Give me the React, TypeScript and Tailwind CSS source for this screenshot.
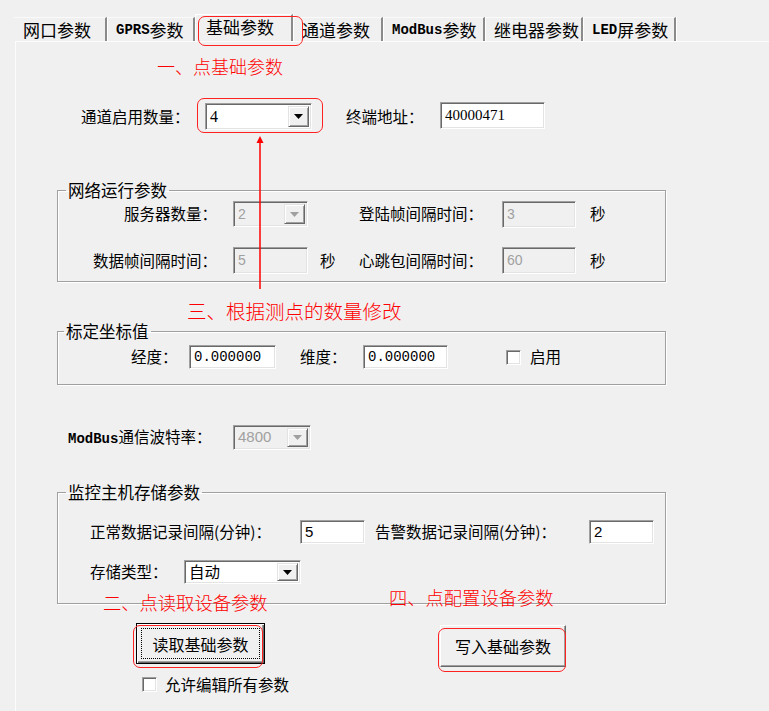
import React from 'react';

const cjk = "font-['Noto_Sans_CJK_SC',sans-serif]";
const mono = "font-['Liberation_Mono',monospace] text-[14px]";
const monoBold = "font-['Liberation_Mono',monospace] text-[14px] font-bold";

const sunken =
  'border border-t-[#a0a0a0] border-l-[#a0a0a0] border-r-white border-b-white shadow-[inset_1px_1px_0_#696969,inset_-1px_-1px_0_#e3e3e3]';

interface FieldProps {
  value: string;
  w: string;
  h: string;
  disabled?: boolean;
  font?: string;
}

function Field({ value, w, h, disabled, font }: FieldProps) {
  return (
    <div
      className={`flex items-center pl-[4px] ${w} ${h} ${sunken} ${
        disabled ? 'bg-[#f0f0f0] text-[#a0a0a0]' : 'bg-white text-black'
      } ${font ?? "font-['Liberation_Sans',sans-serif] text-[14px]"}`}
    >
      {value}
    </div>
  );
}

function Combo({ value, w, h, disabled, font }: FieldProps) {
  return (
    <div
      className={`flex ${w} ${h} ${sunken} ${disabled ? 'bg-[#f0f0f0] text-[#a0a0a0]' : 'bg-white text-black'}`}
    >
      <div className={`flex-1 flex items-center pl-[4px] ${font ?? "font-['Liberation_Sans',sans-serif] text-[14px]"}`}>
        {value}
      </div>
      <div className="w-[21px] m-[2px] ml-0 flex items-center justify-center bg-[#f0f0f0] border border-t-[#e3e3e3] border-l-[#e3e3e3] border-r-[#696969] border-b-[#696969] shadow-[inset_1px_1px_0_#fff,inset_-1px_-1px_0_#a0a0a0]">
        <svg width="9" height="5" viewBox="0 0 9 5">
          <polygon points="0,0 9,0 4.5,5" fill={disabled ? '#a0a0a0' : '#000'} />
        </svg>
      </div>
    </div>
  );
}

function Check() {
  return <div className={`w-[15px] h-[15px] bg-white ${sunken}`} />;
}

function Tab({ label, w, selected }: { label: React.ReactNode; w: string; selected?: boolean }) {
  return (
    <div
      className={`flex items-center ${w} pl-[9px] text-[17px] leading-none border-r-2 border-r-[#8a8a8a] shadow-[1px_0_0_#fff] ${
        selected ? 'h-[27px] -mt-[3px] pb-[3px] border-l border-l-white border-t border-t-white pl-[10px]' : 'h-[24px] border-t border-t-[#fafafa]'
      }`}
    >
      {label}
    </div>
  );
}

function Note({ text, className }: { text: string; className: string }) {
  return <div className={`absolute whitespace-nowrap text-[#ff0000] font-light leading-[24px] ${className}`}>{text}</div>;
}

export default function App() {
  return (
    <div className={`relative w-[769px] h-[711px] overflow-hidden bg-[#f0f0f0] text-black ${cjk}`}>
      {/* tab strip */}
      <div className="flex items-start h-[41px] pt-[17px] pl-[14px]">
        <Tab w="w-[93px]" label="网口参数" />
        <Tab w="w-[88px]" label={<><span className={monoBold}>GPRS</span>参数</>} />
        <Tab w="w-[98px]" selected label="基础参数" />
        <Tab w="w-[90px]" label="通道参数" />
        <Tab w="w-[102px]" label={<><span className={monoBold}>ModBus</span>参数</>} />
        <Tab w="w-[98px]" label="继电器参数" />
        <Tab w="w-[93px]" label={<><span className={monoBold}>LED</span>屏参数</>} />
      </div>

      {/* page */}
      <div className="ml-[15px] h-[670px] border-t border-l border-t-[#fcfcfc] border-l-[#fcfcfc] text-[15.5px]">
        {/* channel count + address */}
        <div className="flex items-center mt-[61px] pl-[65px] h-[27px]">
          <div className="w-[124px]">通道启用数量：</div>
          <Combo value="4" w="w-[107px]" h="h-[27px]" font="font-['Liberation_Serif',serif] text-[16px]" />
          <div className="w-[94px] ml-[34px]">终端地址：</div>
          <div className="-mt-[3px]">
            <Field value="40000471" w="w-[105px]" h="h-[27px]" font="font-['Liberation_Serif',serif] text-[15px]" />
          </div>
        </div>

        {/* network */}
        <fieldset className="ml-[41px] mt-[50px] w-[609px] pb-[7px] border border-[#a0a0a0] shadow-[inset_1px_1px_0_#fff,1px_1px_0_#fff]">
          <legend className="ml-[8px] px-[2px] text-[16.5px] leading-[20px]">网络运行参数</legend>
          <div className="flex items-center h-[26px] mt-[1px]">
            <div className="w-[159px] text-right">服务器数量：</div>
            <div className="ml-[16px]">
              <Combo value="2" w="w-[75px]" h="h-[26px]" disabled />
            </div>
            <div className="w-[51px]" />
            <div className="w-[143px]">登陆帧间隔时间：</div>
            <Field value="3" w="w-[74px]" h="h-[27px]" disabled />
            <div className="ml-[14px]">秒</div>
          </div>
          <div className="flex items-center h-[27px] mt-[20px]">
            <div className="w-[159px] text-right">数据帧间隔时间：</div>
            <div className="ml-[16px]">
              <Field value="5" w="w-[75px]" h="h-[27px]" disabled />
            </div>
            <div className="w-[51px] pl-[12px]">秒</div>
            <div className="w-[143px]">心跳包间隔时间：</div>
            <Field value="60" w="w-[74px]" h="h-[27px]" disabled />
            <div className="ml-[14px]">秒</div>
          </div>
        </fieldset>

        {/* coordinates */}
        <fieldset className="ml-[41px] mt-[39px] w-[609px] pb-[15px] border border-[#a0a0a0] shadow-[inset_1px_1px_0_#fff,1px_1px_0_#fff]">
          <legend className="ml-[6px] px-[2px] text-[16.5px] leading-[20px]">标定坐标值</legend>
          <div className="flex items-center h-[24px] mt-[4px] pl-[73px]">
            <div className="w-[58px]">经度：</div>
            <Field value="0.000000" w="w-[87px]" h="h-[24px]" font={mono} />
            <div className="w-[63px] ml-[24px]">维度：</div>
            <Field value="0.000000" w="w-[85px]" h="h-[24px]" font={mono} />
            <div className="ml-[58px]">
              <Check />
            </div>
            <div className="ml-[9px]">启用</div>
          </div>
        </fieldset>

        {/* baud */}
        <div className="flex items-center mt-[40px] pl-[52px] h-[25px]">
          <div className="w-[165px]">
            <span className={monoBold}>ModBus</span>通信波特率：
          </div>
          <Combo value="4800" w="w-[78px]" h="h-[25px]" disabled font="font-['Liberation_Sans',sans-serif] text-[15px]" />
        </div>

        {/* storage */}
        <fieldset className="ml-[41px] mt-[32px] w-[609px] pb-[19px] border border-[#a0a0a0] shadow-[inset_1px_1px_0_#fff,1px_1px_0_#fff]">
          <legend className="ml-[8px] px-[2px] text-[16.5px] leading-[20px]">监控主机存储参数</legend>
          <div className="flex items-center h-[24px] mt-[18px] pl-[32px]">
            <div className="w-[210px]">正常数据记录间隔(分钟)：</div>
            <Field value="5" w="w-[65px]" h="h-[24px]" font="font-['Liberation_Sans',sans-serif] text-[15px]" />
            <div className="w-[214px] ml-[10px]">告警数据记录间隔(分钟)：</div>
            <Field value="2" w="w-[65px]" h="h-[24px]" font="font-['Liberation_Sans',sans-serif] text-[15px]" />
          </div>
          <div className="flex items-center h-[24px] mt-[16px] pl-[32px]">
            <div className="w-[94px]">存储类型：</div>
            <Combo value="自动" w="w-[117px]" h="h-[24px]" font="text-[15.5px]" />
          </div>
        </fieldset>

        {/* buttons */}
        <div className="flex items-start mt-[19px] pl-[120px]">
          <div className="w-[129px] h-[41px] p-[4px] bg-[#f0f0f0] border border-black shadow-[inset_1px_1px_0_#fff,inset_-1px_-1px_0_#696969,inset_-2px_-2px_0_#a0a0a0]">
            <div className="h-full flex items-center justify-center border border-dotted border-black text-[16px]">
              读取基础参数
            </div>
          </div>
          <div className="ml-[175px] mt-[2px] w-[126px] h-[42px] flex items-center justify-center bg-[#f0f0f0] border border-t-white border-l-white border-r-[#696969] border-b-[#696969] shadow-[inset_-1px_-1px_0_#a0a0a0] text-[16px]">
            写入基础参数
          </div>
        </div>

        <div className="flex items-center mt-[10px] pl-[126px] h-[15px]">
          <Check />
          <div className="ml-[8px]">允许编辑所有参数</div>
        </div>
      </div>

      {/* annotations */}
      <Note text="一、点基础参数" className="left-[157px] top-[54px] text-[18px]" />
      <Note text="三、根据测点的数量修改" className="left-[187px] top-[299px] text-[19.5px]" />
      <Note text="二、点读取设备参数" className="left-[103px] top-[590px] text-[18.3px]" />
      <Note text="四、点配置设备参数" className="left-[389px] top-[585px] text-[18.3px]" />

      <div className="absolute left-[198px] top-[16px] w-[105px] h-[30px] border-[1.5px] border-[#ff2020] rounded-[7px]" />
      <div className="absolute left-[197px] top-[98px] w-[126px] h-[35px] border-[1.5px] border-[#ff2020] rounded-[7px]" />
      <div className="absolute left-[133px] top-[625px] w-[130px] h-[43px] border-[1.5px] border-[#ff2020] rounded-[7px]" />
      <div className="absolute left-[438px] top-[628px] w-[128px] h-[44px] border-[1.5px] border-[#ff2020] rounded-[7px]" />

      <svg className="absolute left-[254px] top-[135px]" width="12" height="156" viewBox="0 0 12 156">
        <line x1="6" y1="6" x2="6" y2="154" stroke="#ff0000" strokeWidth="1.5" />
        <polygon points="6,1 2.5,8 9.5,8" fill="#ff0000" />
      </svg>
    </div>
  );
}
